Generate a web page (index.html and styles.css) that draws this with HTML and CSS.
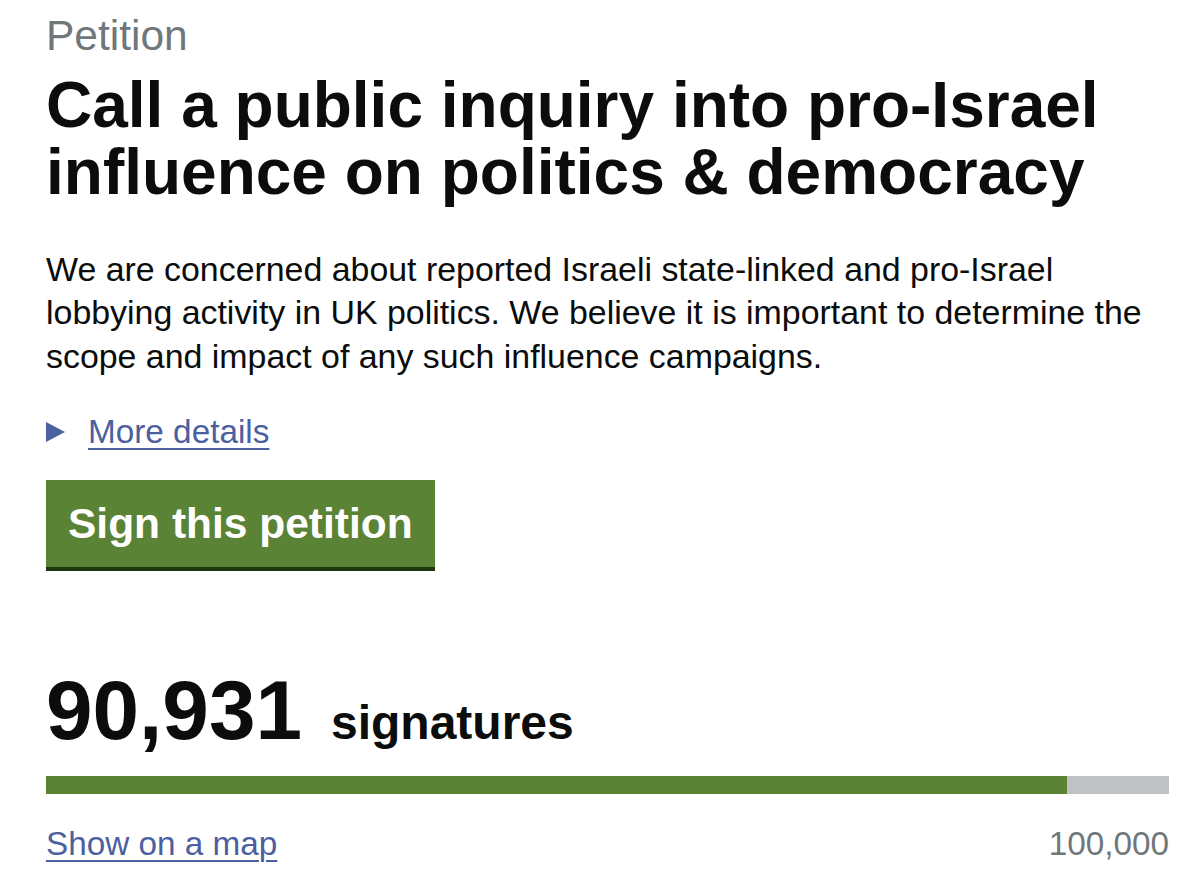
FILE: index.html
```html
<!DOCTYPE html>
<html lang="en">
<head>
<meta charset="utf-8">
<title>Petition</title>
<link rel="stylesheet" href="styles.css">
</head>
<body>
<main class="page">
  <p class="kicker">Petition</p>
  <h1 class="title">Call a public inquiry into pro-Israel influence on politics &amp; democracy</h1>
  <p class="lede">We are concerned about reported Israeli state-linked and pro-Israel lobbying activity in UK politics. We believe it is important to determine the scope and impact of any such influence campaigns.</p>
  <div class="details"><span class="arrow"></span><a class="link" href="#">More details</a></div>
  <a class="button" href="#">Sign this petition</a>
  <div class="count"><span class="num">90,931</span><span class="unit">signatures</span></div>
  <div class="bar"><div class="fill" style="width:90.931%"></div></div>
  <div class="foot"><a class="link" href="#">Show on a map</a><span class="target">100,000</span></div>
</main>
</body>
</html>
```
FILE: styles.css
```css
html, body { margin: 0; padding: 0; background: #fff; }
body { font-family: "Liberation Sans", Arial, sans-serif; color: #0b0c0c; }
.page { width: 1123px; padding: 0 0 0 46px; display: flex; flex-direction: column; align-items: flex-start; }
.kicker { margin: 12px 0 0; font-size: 42.5px; line-height: 48px; color: #6f777b; }
.title { margin: 12px 0 0; font-size: 64px; line-height: 67px; font-weight: 700; letter-spacing: 0; }
.lede { margin: 42px 0 0; max-width: 1123px; font-size: 33.9px; line-height: 43.3px; }
.details { margin-top: 32px; display: flex; align-items: center; gap: 23px; font-size: 33.3px; line-height: 44px; }
.arrow { width: 0; height: 0; border-top: 10.5px solid transparent; border-bottom: 10.5px solid transparent; border-left: 19px solid #4c5f9e; }
.link { color: #4c5f9e; text-decoration: underline; text-underline-offset: 5px; text-decoration-thickness: 2px; }
.button { margin-top: 26px; display: block; background: #5b8336; color: #fff; font-weight: 700; font-size: 42.5px; line-height: 87px; padding: 0 22px; text-decoration: none; box-shadow: 0 4px 0 #1e3510; }
.count { margin-top: 98px; display: flex; align-items: baseline; gap: 29px; font-weight: 700; }
.num { font-size: 83.7px; line-height: 90px; }
.unit { font-size: 48px; }
.bar { margin-top: 21px; width: 1123px; height: 18px; background: #bfc1c3; }
.fill { height: 100%; background: #5b8336; }
.foot { margin-top: 28px; width: 1123px; display: flex; justify-content: space-between; align-items: baseline; font-size: 33.3px; line-height: 44px; }
.target { color: #6f777b; }
```
